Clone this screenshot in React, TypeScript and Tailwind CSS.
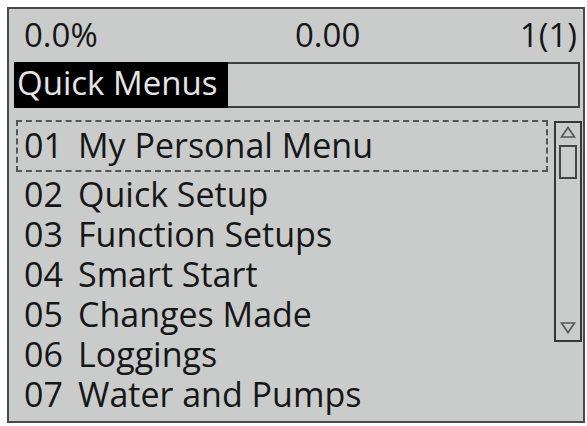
const items = [
  ['02', 'Quick Setup'],
  ['03', 'Function Setups'],
  ['04', 'Smart Start'],
  ['05', 'Changes Made'],
  ['06', 'Loggings'],
  ['07', 'Water and Pumps'],
];

function Row({ num, label }: { num: string; label: string }) {
  return (
    <div className="flex h-[40px] leading-[40px] text-[34px]">
      <span className="w-[54px]">{num}</span>
      <span>{label}</span>
    </div>
  );
}

export default function App() {
  return (
    <div className="w-[587px] h-[426px] bg-white pt-[7px] pl-[7px] font-['Open_Sans',sans-serif] text-[#161616]">
      <div className="w-[578px] h-[416px] border-2 border-[#4a4a4a] bg-[#c9cccb]">
        {/* status line */}
        <div className="flex h-[36px] leading-[36px] text-[33px] mt-[8px] pl-[15px] pr-[6px]">
          <span className="w-[271px]">0.0%</span>
          <span>0.00</span>
          <span className="flex-1 text-right">1(1)</span>
        </div>

        {/* title */}
        <div className="flex h-[46px] mt-[9px] ml-[5px] mr-[3px]">
          <span className="w-[214px] bg-black text-[#e6e6e6] text-[33px] leading-[42px] pl-[3px]">Quick Menus</span>
          <div className="flex-1 border-2 border-l-0 border-[#3f3f3f]" />
        </div>

        {/* list */}
        <div className="flex mt-[12px]">
          <div className="flex-1">
            <div className="ml-[7px] mr-[6px] border-2 border-dashed border-[#555] pt-[3px] pb-[5px] pl-[6px]">
              <div className="flex h-[40px] leading-[40px] text-[34px]">
                <span className="w-[54px]">01</span>
                <span>My Personal Menu</span>
              </div>
            </div>
            <div className="pl-[15px] mt-[2px]">
              {items.map(([n, l]) => (
                <Row key={n} num={n} label={l} />
              ))}
            </div>
          </div>

          {/* scrollbar */}
          <div className="w-[28px] h-[221px] mt-[1px] mr-[1px] border-2 border-[#363636] flex flex-col items-center">
            <svg width="18" height="14" viewBox="0 0 18 14" className="mt-[2px]">
              <path d="M2.5 12 L9 2.5 L15.5 12 Z" fill="none" stroke="#555" strokeWidth="1.6" />
            </svg>
            <div className="w-[18px] h-[34px] mt-[6px] border-2 border-[#444]" />
            <div className="flex-1" />
            <svg width="18" height="14" viewBox="0 0 18 14" className="mb-[5px]">
              <path d="M2.5 2 L9 11.5 L15.5 2 Z" fill="none" stroke="#555" strokeWidth="1.6" />
            </svg>
          </div>
        </div>
      </div>
    </div>
  );
}
